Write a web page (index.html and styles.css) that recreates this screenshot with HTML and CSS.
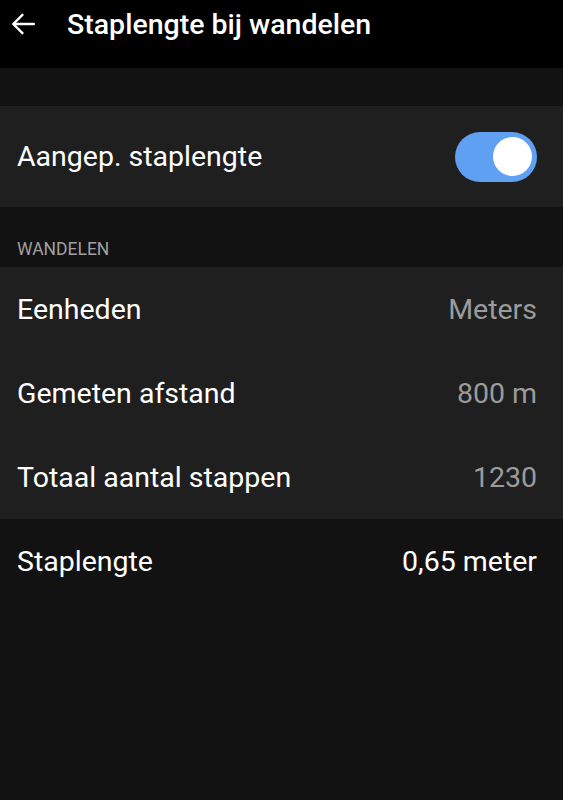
FILE: index.html
```html
<!DOCTYPE html>
<html lang="nl">
  <head>
    <meta charset="UTF-8" />
    <meta name="viewport" content="width=device-width, initial-scale=1.0" />
    <title>Staplengte bij wandelen</title>
    <link rel="stylesheet" href="styles.css">
  </head>

  <body>
    <header class="topbar">
      <svg class="back" viewBox="0 0 24 24" width="26" height="26">
        <path d="M22 12H3M11.5 3.5L3 12l8.5 8.5" fill="none" stroke="#fff" stroke-width="2.2" stroke-linecap="round" stroke-linejoin="round"/>
      </svg>
      <h1 class="title">Staplengte bij wandelen</h1>
    </header>

    <div class="spacer"></div>

    <section class="card card-toggle">
      <div class="row">
        <span class="label">Aangep. staplengte</span>
        <span class="switch"><span class="knob"></span></span>
      </div>
    </section>

    <div class="section-title">WANDELEN</div>

    <section class="card">
      <div class="row">
        <span class="label">Eenheden</span>
        <span class="value">Meters</span>
      </div>
      <div class="row">
        <span class="label">Gemeten afstand</span>
        <span class="value">800 m</span>
      </div>
      <div class="row">
        <span class="label">Totaal aantal stappen</span>
        <span class="value">1230</span>
      </div>
    </section>

    <div class="row">
      <span class="label">Staplengte</span>
      <span class="value value-strong">0,65 meter</span>
    </div>
  </body>
</html>
```

FILE: styles.css
```css
body {
  margin: 0;
  background: #121212;
  color: #fff;
  font-family: Roboto, "Noto Sans", sans-serif;
  height: 800px;
  overflow: hidden;
}

.topbar {
  background: #000;
  height: 68px;
  display: flex;
  align-items: center;
  padding: 0 0 20px 10px;
  box-sizing: border-box;
}

.back {
  flex: none;
}

.title {
  margin: 0 0 0 31px;
  font-size: 28.5px;
  font-weight: 500;
}

.spacer {
  height: 38px;
}

.card {
  background: #1f1f1f;
}

.card-toggle .row {
  height: 101px;
}

.row {
  height: 84px;
  display: flex;
  align-items: center;
  justify-content: space-between;
  padding: 0 26px 0 17px;
}

.label {
  font-size: 28.5px;
}

.value {
  font-size: 28.5px;
  color: #9b9b9b;
}

.value-strong {
  color: #fff;
}

.section-title {
  height: 60px;
  box-sizing: border-box;
  padding: 32px 0 0 17px;
  font-size: 17.5px;
  color: #a0a0a0;
}

.switch {
  width: 82px;
  height: 50px;
  border-radius: 25px;
  background: #60a0f2;
  display: flex;
  align-items: center;
  justify-content: flex-end;
  padding-right: 5px;
  box-sizing: border-box;
}

.knob {
  width: 39px;
  height: 39px;
  border-radius: 50%;
  background: #fff;
}
```
